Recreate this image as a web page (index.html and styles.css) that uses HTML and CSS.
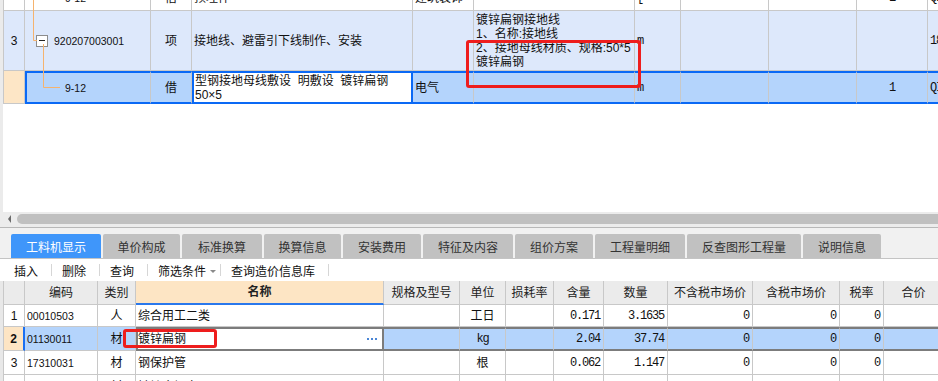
FILE: index.html
```html
<!DOCTYPE html>
<html lang="zh-CN">
<head>
<meta charset="utf-8">
<title>工料机显示</title>
<link rel="stylesheet" href="styles.css">
</head>
<body>
<div class="app">
  <section class="upper">
    <div class="tgrid">
      <div class="trow r-part">
        <div class="c"></div>
        <div class="c code-part"><span class="n">9-12</span></div>
        <div class="c ctr">借</div>
        <div class="c">预埋件</div>
        <div class="c">建筑装饰</div>
        <div class="c"></div>
        <div class="c m">[</div>
        <div class="c"></div>
        <div class="c"></div>
        <div class="c ctr m">1</div>
        <div class="c m">QI</div>
      </div>
      <div class="trow r-item">
        <div class="c ctr">3</div>
        <div class="c code-item"><span class="tbox"></span><span class="n">920207003001</span></div>
        <div class="c ctr">项</div>
        <div class="c">接地线、避雷引下线制作、安装</div>
        <div class="c"></div>
        <div class="c feat">镀锌扁钢接地线<br>1、名称:接地线<br>2、接地母线材质、规格:50*5<br>镀锌扁钢</div>
        <div class="c m">m</div>
        <div class="c"></div>
        <div class="c"></div>
        <div class="c"></div>
        <div class="c m">18</div>
      </div>
      <div class="trow r-sel">
        <div class="c rn-sel"></div>
        <div class="c sel code-sel"><span class="n">9-12</span></div>
        <div class="c sel ctr">借</div>
        <div class="c sel edit-blue"><div class="wrap">型钢接地母线敷设&nbsp; 明敷设&nbsp; 镀锌扁钢<br>50×5</div></div>
        <div class="c sel">电气</div>
        <div class="c sel"></div>
        <div class="c sel m">m</div>
        <div class="c sel"></div>
        <div class="c sel"></div>
        <div class="c sel ctr m">1</div>
        <div class="c sel m">QI</div>
      </div>
    </div>
    <svg class="tree" width="80" height="100" viewBox="0 0 80 100">
      <path d="M30.5 0 V40.5 H34 M40.5 44 V87.5 H57" fill="none" stroke="#f5b36e" stroke-width="1"/>
    </svg>
    <div class="mark mark-top"></div>
  </section>

  <div class="hscroll">
    <span class="arrow"></span>
    <span class="thumb"></span>
  </div>

  <nav class="tabs">
    <div class="tab on w90">工料机显示</div>
    <div class="tab w77">单价构成</div>
    <div class="tab w80">标准换算</div>
    <div class="tab w77">换算信息</div>
    <div class="tab w78">安装费用</div>
    <div class="tab w90">特征及内容</div>
    <div class="tab w78">组价方案</div>
    <div class="tab w90">工程量明细</div>
    <div class="tab w114">反查图形工程量</div>
    <div class="tab w78">说明信息</div>
  </nav>

  <div class="toolbar">
    <span class="tool">插入</span><span class="sep"></span>
    <span class="tool">删除</span><span class="sep"></span>
    <span class="tool">查询</span><span class="sep"></span>
    <span class="tool">筛选条件</span><span class="caret"></span><span class="sep near"></span>
    <span class="tool">查询造价信息库</span><span class="sep"></span>
  </div>

  <section class="lower">
    <div class="brow bhead">
      <div class="c"></div>
      <div class="c ctr">编码</div>
      <div class="c ctr">类别</div>
      <div class="c ctr hname">名称</div>
      <div class="c ctr">规格及型号</div>
      <div class="c ctr">单位</div>
      <div class="c ctr">损耗率</div>
      <div class="c ctr">含量</div>
      <div class="c ctr">数量</div>
      <div class="c ctr">不含税市场价</div>
      <div class="c ctr">含税市场价</div>
      <div class="c ctr">税率</div>
      <div class="c ctr">合价</div>
    </div>
    <div class="brow h22">
      <div class="c ctr">1</div>
      <div class="c"><span class="n">00010503</span></div>
      <div class="c ctr">人</div>
      <div class="c">综合用工二类</div>
      <div class="c"></div>
      <div class="c ctr">工日</div>
      <div class="c"></div>
      <div class="c num">0.171</div>
      <div class="c num">3.1635</div>
      <div class="c num">0</div>
      <div class="c num">0</div>
      <div class="c num">0</div>
      <div class="c"></div>
    </div>
    <div class="brow bsel">
      <div class="c ctr rn2">2</div>
      <div class="c lb"><span class="n">01130011</span></div>
      <div class="c ctr lb">材</div>
      <div class="c edit-grey"><span class="etext">镀锌扁钢</span><span class="more"><i></i><i></i><i></i></span></div>
      <div class="c dk"></div>
      <div class="c ctr dk m">kg</div>
      <div class="c dk"></div>
      <div class="c num dk">2.04</div>
      <div class="c num dk">37.74</div>
      <div class="c num dk">0</div>
      <div class="c num dk">0</div>
      <div class="c num dk">0</div>
      <div class="c dk"></div>
    </div>
    <div class="brow">
      <div class="c ctr">3</div>
      <div class="c"><span class="n">17310031</span></div>
      <div class="c ctr">材</div>
      <div class="c">钢保护管</div>
      <div class="c"></div>
      <div class="c ctr">根</div>
      <div class="c"></div>
      <div class="c num">0.062</div>
      <div class="c num">1.147</div>
      <div class="c num">0</div>
      <div class="c num">0</div>
      <div class="c num">0</div>
      <div class="c"></div>
    </div>
    <div class="brow">
      <div class="c ctr">4</div>
      <div class="c"><span class="n">03000000</span></div>
      <div class="c ctr">材</div>
      <div class="c">镀锌扁钢卡子</div>
      <div class="c"></div>
      <div class="c ctr m">kg</div>
      <div class="c"></div>
      <div class="c num">0.198</div>
      <div class="c num">3.7517</div>
      <div class="c num">0</div>
      <div class="c num">0</div>
      <div class="c num">0</div>
      <div class="c"></div>
    </div>
    <div class="mark mark-bot"></div>
  </section>
</div>
</body>
</html>
```

FILE: styles.css
```css
* { box-sizing: border-box; }
html, body { margin: 0; padding: 0; }
body {
  width: 938px;
  height: 381px;
  overflow: hidden;
  background: #fff;
  color: #111;
  font-family: "Liberation Sans", "Noto Sans CJK SC", sans-serif;
  font-size: 12px;
}
.app {
  width: 938px;
  height: 381px;
  overflow: hidden;
  display: flex;
  flex-direction: column;
}

/* generic cells */
.c {
  display: flex;
  align-items: center;
  min-width: 0;
  overflow: hidden;
  white-space: nowrap;
  padding: 0 2px;
  border-right: 1px solid #c8c8c8;
  border-bottom: 1px solid #c8c8c8;
  line-height: 14px;
}
.ctr { justify-content: center; }
.n { font-size: 10.5px; }
.m {
  font-family: "Liberation Mono", monospace;
  letter-spacing: -1.2px;
}
.num {
  justify-content: flex-end;
  font-family: "Liberation Mono", monospace;
  letter-spacing: -1.2px;
  padding-right: 3px;
}

/* ---------- upper grid ---------- */
.upper {
  position: relative;
  flex: none;
  height: 212px;
  border-left: 3px solid #ebebeb;
  overflow: hidden;
}
.tgrid {
  display: flex;
  flex-direction: column;
  width: 1000px;
}
.trow {
  display: grid;
  grid-template-columns: 22px 126px 41px 221px 61px 161px 46px 88px 88px 71px 60px;
}
.trow > .c:first-child { border-left: 1px solid #c8c8c8; }

.r-part { height: 11px; }
.r-part .c { align-items: flex-end; padding-bottom: 5px; }
.code-part { padding-left: 40px; }

.r-item { height: 60px; background: #dde8fb; }
.code-item { padding-left: 11px; gap: 6px; }
.tbox {
  position: relative;
  flex: none;
  width: 12px;
  height: 12px;
  border: 1px solid #8c8c8c;
  background: #fff;
}
.tbox::after {
  content: "";
  position: absolute;
  left: 2px;
  top: 4px;
  width: 6px;
  height: 1px;
  background: #222;
}
.feat { white-space: nowrap; align-items: center; padding-left: 2px; }

.r-sel { height: 33px; background: #b4d4fc; }
.r-sel .sel {
  border-top: 2px solid #0a69f5;
  border-bottom: 2px solid #0a69f5;
}
.rn-sel { background: #fde6c6; }
.code-sel { border-left: 2px solid #0a69f5; padding-left: 38px; }
.edit-blue {
  background: #fff;
  border-left: 2px solid #0a69f5;
  border-right: 2px solid #0a69f5;
  padding-left: 1px;
}
.edit-blue .wrap { white-space: nowrap; }

.tree {
  position: absolute;
  left: 0;
  top: 0;
}

.mark {
  position: absolute;
  border: 3px solid #ee1d1d;
  border-radius: 3px;
}
.mark-top { left: 463px; top: 40px; width: 175px; height: 48px; }

/* ---------- horizontal scrollbar ---------- */
.hscroll {
  flex: none;
  height: 16px;
  background: #ececec;
  border-bottom: 1px solid #b8b8b8;
  display: flex;
  align-items: center;
  padding: 0 0 1px 8px;
  gap: 6px;
}
.arrow {
  width: 0;
  height: 0;
  border-top: 4px solid transparent;
  border-bottom: 4px solid transparent;
  border-right: 3px solid #6a6a6a;
}
.thumb {
  flex: 1;
  height: 10px;
  background: #c0c0c0;
  border-radius: 5px 0 0 5px;
}

/* ---------- tabs ---------- */
.tabs {
  flex: none;
  height: 31px;
  background: #f1f1f1;
  border-bottom: 1px solid #c4c4c4;
  display: flex;
  align-items: flex-end;
  gap: 2px;
  padding-left: 11px;
}
.tab {
  height: 24px;
  background: #c1c1c1;
  color: #333;
  border-radius: 2px 2px 0 0;
  display: flex;
  align-items: center;
  justify-content: center;
  font-family: "Noto Sans CJK SC", sans-serif;
  font-size: 12px;
}
.tab.on { background: #3f96fa; color: #fff; }
.w77 { width: 77px; }
.w78 { width: 78px; }
.w80 { width: 80px; }
.w90 { width: 90px; }
.w114 { width: 114px; }

/* ---------- toolbar ---------- */
.toolbar {
  flex: none;
  height: 22px;
  display: flex;
  align-items: center;
  padding-left: 14px;
  background: #fff;
  color: #111;
}
.sep {
  width: 1px;
  height: 12px;
  background: #d6d6d6;
  margin: 0 10px 0 13px;
}
.sep.near { margin-left: 4px; }
.caret {
  width: 0;
  height: 0;
  margin-left: 4px;
  margin-top: 2px;
  border-left: 3px solid transparent;
  border-right: 3px solid transparent;
  border-top: 3px solid #8a8a8a;
}

/* ---------- lower grid ---------- */
.lower {
  position: relative;
  flex: none;
  border-left: 3px solid #e8e8e8;
}
.brow {
  display: grid;
  grid-template-columns: 22px 73px 38px 248px 76px 46px 48px 50px 64px 85px 87px 44px 60px;
  height: 24px;
}
.brow > .c:first-child { border-left: 1px solid #c8c8c8; }
.brow.h22 { height: 22px; }
.bhead { background: #ebebeb; color: #222; }
.hname {
  background: #fde5c4;
  font-weight: bold;
  border-bottom: 2px solid #2a78ec;
}
.bsel .rn2 {
  background: #fde5c4;
  font-weight: bold;
  border-right: 2px solid #1a6ff2;
}
.bsel .lb { background: #b4d4fc; }
.bsel .dk {
  background: #b4d4fc;
  border-top: 2px solid #7c7c7c;
  border-bottom: 2px solid #7c7c7c;
}
.edit-grey {
  background: #fff;
  border: 2px solid #7c7c7c;
  padding: 0 5px 0 0;
  justify-content: space-between;
}
.etext { padding-left: 0; }
.more { display: flex; gap: 2px; }
.more i {
  display: block;
  width: 2px;
  height: 2px;
  background: #4a86d6;
}
.mark-bot { left: 120px; top: 48px; width: 94px; height: 19px; }
```
